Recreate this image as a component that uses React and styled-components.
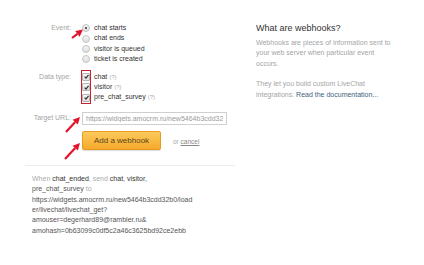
import React from 'react'
import styled, { createGlobalStyle } from 'styled-components'

const GlobalStyle = createGlobalStyle`
	html, body {
		margin: 0;
		padding: 0;
		background: #fff;
		font-family: "Liberation Sans", Arial, sans-serif;
	}
`;

const eventOptions = ['chat starts', 'chat ends', 'visitor is queued', 'ticket is created'];
const dataTypes = ['chat', 'visitor', 'pre_chat_survey'];

const Arrow = ({ x1, y1, x2, y2 }) => {
	const ang = Math.atan2(y2 - y1, x2 - x1);
	const len = 7;
	const wide = 3.6;
	const bx = x2 - Math.cos(ang) * len;
	const by = y2 - Math.sin(ang) * len;
	const px = -Math.sin(ang) * wide;
	const py = Math.cos(ang) * wide;
	return (
		<g fill="#e3132b" stroke="#e3132b">
			<line x1={x1} y1={y1} x2={bx} y2={by} strokeWidth="2.2" />
			<polygon points={`${x2},${y2} ${bx + px},${by + py} ${bx - px},${by - py}`} stroke="none" />
		</g>
	);
};

export default function App() {
	return (
		<Page>
			<GlobalStyle />

			<Left>
				<Form>
					<Label>Event:</Label>
					<Options>
						{eventOptions.map((opt, i) => (
							<Option key={opt}>
								<Radio $checked={i === 0} />
								<OptText>{opt}</OptText>
							</Option>
						))}
					</Options>

					<Label>Data type:</Label>
					<Options>
						<Highlight />
						{dataTypes.map(type => (
							<Option key={type}>
								<Check>
									<svg width="5" height="5" viewBox="0 0 5 5">
										<path d="M0.6 2.6 L2 4 L4.5 0.8" fill="none" stroke="#333" strokeWidth="1.2" />
									</svg>
								</Check>
								<OptText>{type}</OptText>
								<Hint>(?)</Hint>
							</Option>
						))}
					</Options>

					<Label $top={2}>Target URL:</Label>
					<UrlInput $top={2} readOnly value="https://widgets.amocrm.ru/new5464b3cdd32b0/loader/livechat/livechat_get" />

					<Empty />
					<Actions>
						<AddButton>Add a webhook</AddButton>
						<Cancel>or <a>cancel</a></Cancel>
					</Actions>
				</Form>

				<Divider />

				<Summary>
					<Line>
						<Muted>When </Muted><Strong>chat_ended</Strong><Muted>, send </Muted><Strong>chat</Strong>, <Strong>visitor</Strong>,
					</Line>
					<Line>pre_chat_survey <Muted>to</Muted></Line>
					<Line>https://widgets.amocrm.ru/new5464b3cdd32b0/load</Line>
					<Line>er/livechat/livechat_get?</Line>
					<Line>amouser=degerhard89@rambler.ru&amp;</Line>
					<Line>amohash=0b63099c0df5c2a46c3625bd92ce2ebb</Line>
				</Summary>
			</Left>

			<Right>
				<Heading>What are webhooks?</Heading>
				<Para>Webhooks are pieces of information sent to your web server when particular event occurs.</Para>
				<Para $top={10}>They let you build custom LiveChat integrations. <DocLink>Read the documentation...</DocLink></Para>
			</Right>

			<Overlay width="424" height="265">
				<Arrow x1={72} y1={38} x2={83} y2={29.5} />
				<Arrow x1={66} y1={132} x2={80} y2={117} />
				<Arrow x1={65} y1={159} x2={80} y2={143} />
			</Overlay>
		</Page>
	)
}

const Page = styled.div`
	position: relative;
	display: flex;
	width: 424px;
	height: 265px;
	overflow: hidden;
	font-size: 7px;
	color: #333;
`;

const Left = styled.div`
	width: 240px;
	padding-top: 23px;
	flex-shrink: 0;
`;

const Form = styled.div`
	display: grid;
	grid-template-columns: 71px 1fr;
	column-gap: 11px;
	row-gap: 7px;
	align-items: start;
`;

const Label = styled.div`
	text-align: right;
	color: #a5a5a5;
	line-height: 10.4px;
	margin-top: ${props => (props.$top || 0) + 'px'};
	padding-top: ${props => (props.$top ? '1px' : '0')};
`;

const Options = styled.div`
	position: relative;
	display: flex;
	flex-direction: column;
`;

const Option = styled.div`
	display: flex;
	align-items: center;
	height: 10.4px;
	line-height: 10.4px;
`;

const Radio = styled.span`
	position: relative;
	width: 6px;
	height: 6px;
	border-radius: 50%;
	border: 0.5px solid #c4c4c4;
	background: linear-gradient(#f4f4f4, #dedede);
	margin-right: 4px;

	&::after {
		content: '';
		display: ${props => (props.$checked ? 'block' : 'none')};
		position: absolute;
		left: 1.75px;
		top: 1.75px;
		width: 2.5px;
		height: 2.5px;
		border-radius: 50%;
		background: #333;
	}
`;

const Check = styled.span`
	display: flex;
	align-items: center;
	justify-content: center;
	width: 6px;
	height: 6px;
	border: 0.5px solid #b5b5b5;
	background: linear-gradient(#f6f6f6, #e0e0e0);
	border-radius: 1px;
	margin-right: 4px;
`;

const Highlight = styled.span`
	position: absolute;
	left: -1px;
	top: -2px;
	width: 8px;
	height: 32px;
	border: 1.2px solid #c8202f;
	pointer-events: none;
`;

const OptText = styled.span`
	color: #333;
`;

const Hint = styled.span`
	color: #aaa;
	margin-left: 2px;
	font-size: 6px;
`;

const UrlInput = styled.input`
	box-sizing: border-box;
	width: 145px;
	height: 13px;
	margin: ${props => (props.$top || 0) + 'px'} 0 0 0;
	padding: 0 3px;
	border: 1px solid #cfcfcf;
	font-family: inherit;
	font-size: 7px;
	color: #9a9a9a;
	outline: none;
`;

const Empty = styled.div``;

const Actions = styled.div`
	display: flex;
	align-items: center;
	gap: 12px;
	margin-top: -1px;
`;

const AddButton = styled.button`
	box-sizing: border-box;
	width: 79px;
	height: 19px;
	border: 1px solid #e59b22;
	border-radius: 2px;
	background: linear-gradient(#fcca5c, #f5aa2c);
	box-shadow: 0 1px 1px rgba(0, 0, 0, 0.15);
	font-family: inherit;
	font-size: 8px;
	color: #5a4416;
	padding: 0;
`;

const Cancel = styled.span`
	color: #aaa;
	font-size: 6.5px;
	margin-top: 3px;

	a {
		color: #888;
		text-decoration: underline;
	}
`;

const Divider = styled.div`
	width: 210px;
	height: 1px;
	margin: 15px 0 0 25px;
	background: #ececec;
`;

const Summary = styled.div`
	padding: 8px 0 0 32px;
	color: #555;
`;

const Line = styled.div`
	line-height: 10.4px;
	white-space: nowrap;
`;

const Muted = styled.span`
	color: #aaa;
`;

const Strong = styled.span`
	color: #333;
`;

const Right = styled.div`
	padding: 22px 0 0 16px;
	width: 150px;
`;

const Heading = styled.div`
	font-size: 9px;
	line-height: 12px;
	color: #333;
	margin-bottom: 4px;
`;

const Para = styled.div`
	width: 140px;
	color: #a5a5a5;
	line-height: 10.4px;
	margin-top: ${props => (props.$top || 0) + 'px'};
`;

const DocLink = styled.span`
	color: #3e5f80;
`;

const Overlay = styled.svg`
	position: absolute;
	left: 0;
	top: 0;
	pointer-events: none;
`;
